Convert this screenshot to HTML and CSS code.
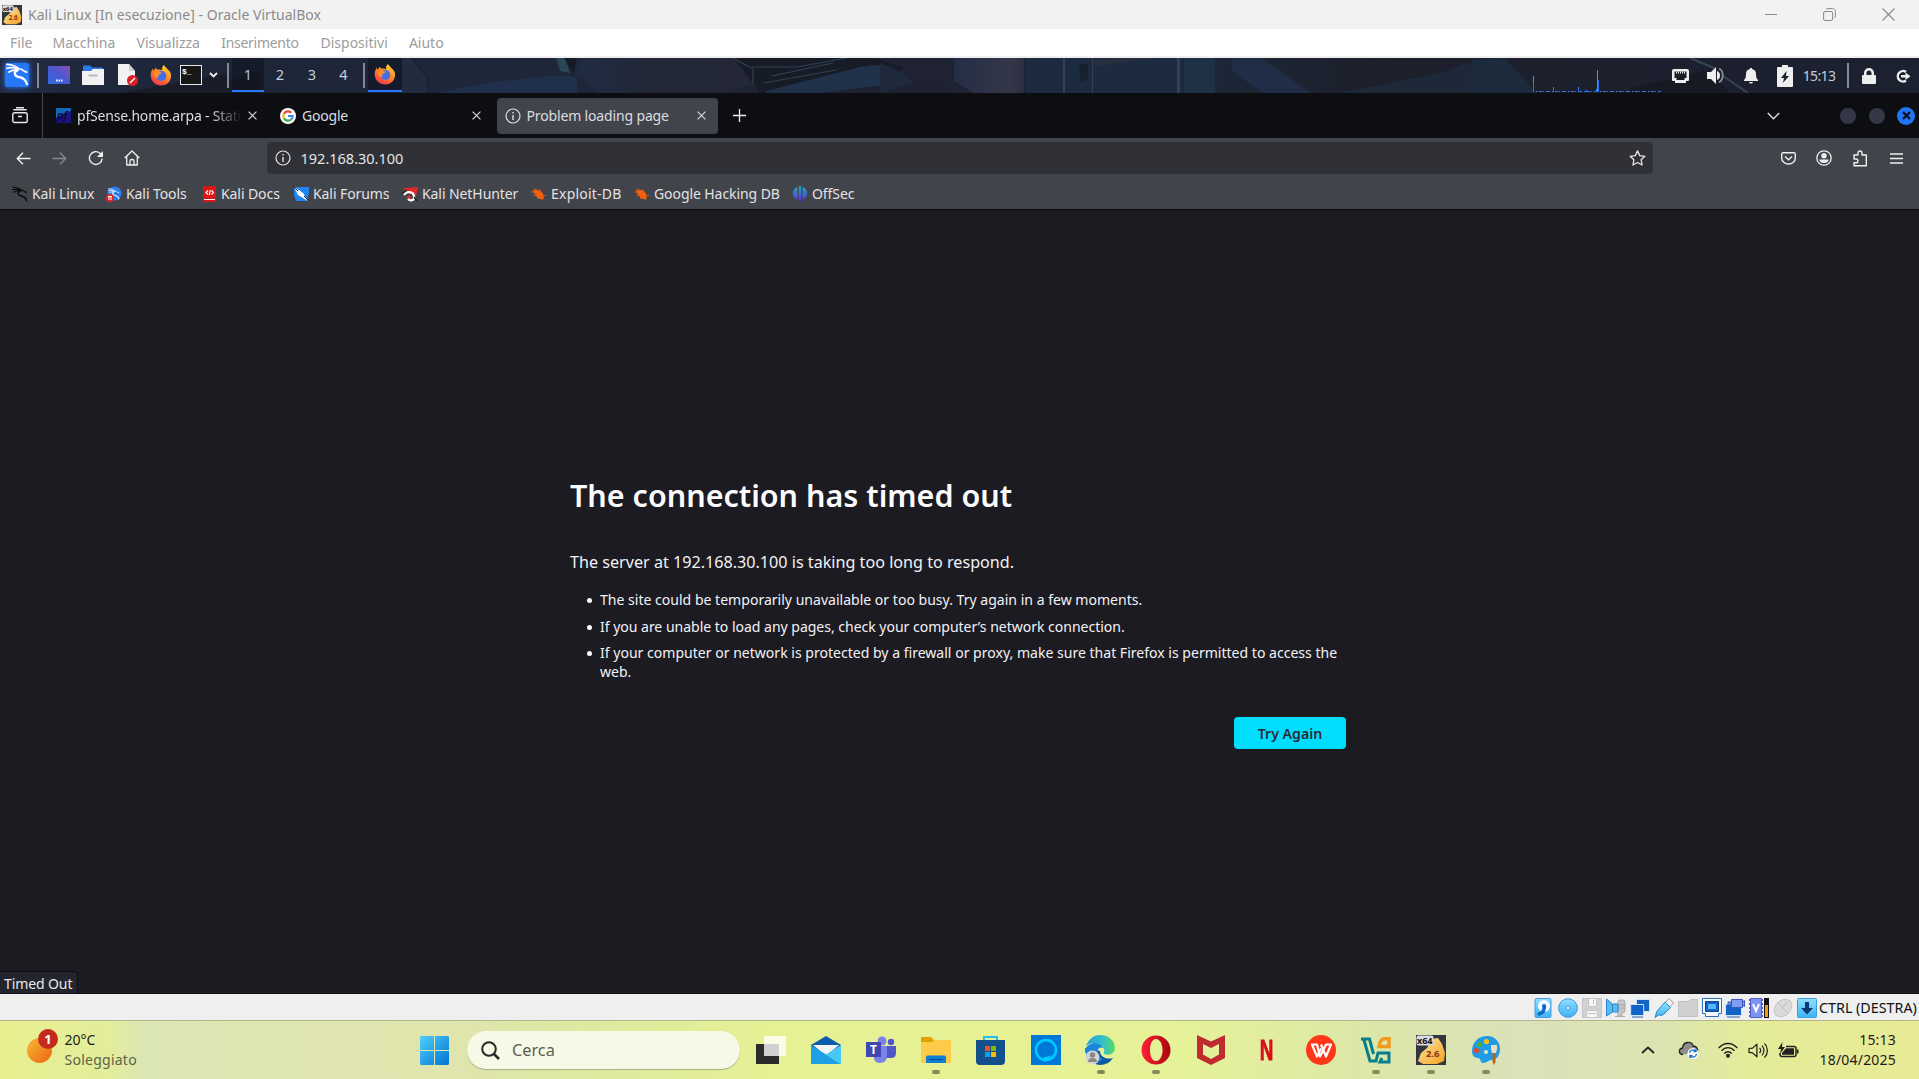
FILE: index.html
```html
<!DOCTYPE html>
<html lang="it">
<head>
<meta charset="utf-8">
<title>Kali Linux [In esecuzione] - Oracle VirtualBox</title>
<link rel="stylesheet" href="styles.css">
</head>
<body>
<svg class="defs" width="0" height="0" aria-hidden="true">
  <defs>
    <linearGradient id="fxo" x1=".8" y1="0" x2=".2" y2="1"><stop offset="0" stop-color="#ffd43a"/><stop offset=".45" stop-color="#ff8a26"/><stop offset="1" stop-color="#f0304f"/></linearGradient>
    <linearGradient id="win" x1="0" y1="0" x2="1" y2="1"><stop offset="0" stop-color="#4fd0fd"/><stop offset="1" stop-color="#0072d2"/></linearGradient>
    <linearGradient id="desk" x1="0" y1="1" x2="1" y2="0"><stop offset="0" stop-color="#2f6ae8"/><stop offset=".5" stop-color="#4b58d0"/><stop offset="1" stop-color="#8a4fb8"/></linearGradient>
    <linearGradient id="off" x1="0" y1="0" x2="0" y2="1"><stop offset="0" stop-color="#20b0c0"/><stop offset="1" stop-color="#5a28d8"/></linearGradient>
    <linearGradient id="vb" x1="0" y1="0" x2="0" y2="1"><stop offset="0" stop-color="#8fe0ff"/><stop offset="1" stop-color="#3db4f4"/></linearGradient>
    <linearGradient id="gold" x1="0" y1="0" x2="1" y2="1"><stop offset="0" stop-color="#ffe7a0"/><stop offset="1" stop-color="#f2a224"/></linearGradient>
    <symbol id="firefox" viewBox="0 0 22 22">
      <path fill="url(#fxo)" d="M14 1c1 1.700 2.500 2.600 3.500 4.200C20 7 21.500 9.500 21 13c-.7 5-4.800 8.500-10 8.500S1 17.500.7 12C.5 8.500 1.800 6 3 4.500L3.600 7 6 3.500l.8 2.300c2-.6 4 0 5.200.6C11.600 4.500 12.400 2.300 14 1z"/>
      <circle cx="11.300" cy="12" r="5" fill="#3f6fe8"/>
      <path fill="#ff8f2a" d="M4 9c2-2 4.500-1.500 6-.8l2 .6c-.8 1.500-2.700 1.400-3.600 2.400-.6.900-.4 2 .4 3C5.500 14 4 12 4 9z"/>
    </symbol>
    <symbol id="dragon" viewBox="0 0 24 24">
      <path fill="none" stroke="currentColor" stroke-width="1.800" stroke-linecap="round" d="M1 1.500c5 .5 9 1.500 12 4.200M1 5.500C5 4.500 9 5 12 6.500M3 9.500c3-2 6-2.500 9-1.500M11 6c2.500-.2 6 .5 8 2.500l2.500 1"/>
      <path fill="none" stroke="currentColor" stroke-width="2.400" stroke-linecap="round" d="M12 7.500c-4 1.500-3.500 6 .5 7 4 .8 8 1.500 9.300 7.500"/>
    </symbol>
    <symbol id="info" viewBox="0 0 16 16"><circle cx="8" cy="8" r="7" fill="none" stroke="currentColor" stroke-width="1.200"/><path fill="none" stroke="currentColor" stroke-width="1.400" d="M8 7v5M8 4v1.500"/></symbol>
    <symbol id="x" viewBox="0 0 8 8"><path fill="none" stroke="currentColor" d="M.5.5l7 7M7.500.5l-7 7"/></symbol>
    <symbol id="bug" viewBox="0 0 16 16"><path fill="#f2600f" d="M1.500 5l3-1.500L9 4.500l3 3 1 4-1.500 2-4.500-1-3-4z"/><path stroke="#d65a14" stroke-width=".8" fill="none" d="M3 2l2 3M9 3v3M0 6h4M2 10l3-1M6 13l2-2M15.500 9.500h-3M12 14l-1-3"/></symbol>
    <symbol id="vbox64" viewBox="0 0 30 30">
      <path fill="#34363f" d="M0 0h30v30H0z"/>
      <path fill="url(#gold)" d="M16 4l6-1 4 6 3 9-1 8-7 3H7l-5-3 3-8 6-5z"/>
      <rect x=".5" y=".5" width="17" height="10" rx="2" fill="#d7dade"/>
      <text x="1" y="9" class="vb-tag">x64</text><text x="10" y="22" class="vb-num">2.6</text>
    </symbol>
    <symbol id="vol" viewBox="0 0 20 16"><path d="M1 6v4h3l4.500 4V2L4 6z" fill="none" stroke="currentColor" stroke-width="1.200" stroke-linejoin="round"/><path d="M11 5.500c1.200 1.400 1.200 3.600 0 5M13.300 3.300c2.500 2.600 2.500 6.800 0 9.400M15.700 1.200c3.700 3.800 3.700 9.800 0 13.600" fill="none" stroke="currentColor" stroke-width="1.200"/></symbol>
  </defs>
</svg>

<header class="titlebar">
  <svg class="app-icon" width="20" height="20"><use href="#vbox64"/></svg>
  <span class="app-title">Kali Linux [In esecuzione] - Oracle VirtualBox</span>
  <div class="window-buttons">
    <svg width="12" height="12"><path d="M0 5.500h12" stroke="#8a8a8a"/></svg>
    <svg width="13" height="13" fill="none" stroke="#8a8a8a"><rect x=".6" y="3.500" width="9" height="9" rx="1.500"/><path d="M3 1.500c.4-.6 1-.9 1.800-.9h4.700c1.700 0 2.900 1.200 2.900 2.900V8c0 .8-.3 1.400-.9 1.800"/></svg>
    <svg width="13" height="13"><path d="M.5.5l12 12M12.500.5l-12 12" stroke="#8a8a8a" stroke-width="1.100"/></svg>
  </div>
</header>
<nav class="menubar"><span>File</span><span>Macchina</span><span>Visualizza</span><span class="tight">Inserimento</span><span>Dispositivi</span><span>Aiuto</span></nav>

<section class="panel">
  <svg class="wallpaper" width="1919" height="35" viewBox="0 0 1919 35" preserveAspectRatio="none">
    <defs><linearGradient id="wp"><stop offset="0" stop-color="#212a3f"/><stop offset=".12" stop-color="#1d2537"/><stop offset=".25" stop-color="#1e2739"/><stop offset=".5" stop-color="#1f2231"/><stop offset=".6" stop-color="#1c293c"/><stop offset=".72" stop-color="#1d1f2b"/><stop offset="1" stop-color="#1c2130"/></linearGradient>
    <linearGradient id="fade"><stop offset="0" stop-color="#1e2b43"/><stop offset=".4" stop-color="#232838"/><stop offset="1" stop-color="#232737"/></linearGradient>
    <linearGradient id="blk"><stop offset="0" stop-color="#242d46"/><stop offset=".8" stop-color="#353748"/><stop offset="1" stop-color="#2a3044"/></linearGradient></defs>
    <path fill="url(#wp)" d="M0 0h1919v35H0z"/>
    <path fill="#1a1d28" d="M215 28l45-16v23h-45zM120 35l110-20v20z"/>
    <path fill="#232c3f" d="M402 0h10l16 20 2 15h-28z"/>
    <path fill="none" stroke="#182234" stroke-width="2" d="M412 0l15 19 2 16"/>
    <path fill="#20304c" d="M440 35c30-8 70-14 125-18l12 3v15z"/>
    <path fill="#2b4558" d="M556 0h9l5 15-10-2z"/><path fill="#141a25" d="M564 0h12l-2 16z"/>
    <path fill="url(#fade)" d="M582 0h150l20 26-35 9H600L575 15z"/>
    <path fill="#171b26" d="M735 0h140l30 10-25 12-70 13h-50z"/>
    <path fill="none" stroke="#2f4154" stroke-width="1.200" d="M733 0l20 11v15M772 18l61-13M764 25l72-13M752 9h45l50-9"/>
    <path fill="#1f3249" d="M766 33L860 9c15-4 35-2 48 12l-28 14H766z"/>
    <path fill="#1d2130" d="M820 35l105-13 30 13z"/>
    <path fill="#1f293c" d="M880 5l14 5 20 15-34 10z"/>
    <path fill="url(#blk)" d="M954 0h70v35h-50l-20-12z"/>
    <path fill="#1c2b40" d="M1026 0h156v35h-156z"/><path fill="#343f55" d="M1063 0h2v35h-2zM1092 0h1v35h-1zM1177 0h3v35h-3z"/>
    <path fill="#292e3f" d="M1094 2l20-2h40l-35 5-25 4z"/><path fill="#162030" d="M1079 6h9v15l-7 3z"/>
    <path fill="#1f3145" d="M1184 0h31v35h-31z"/>
    <path fill="#1f2d47" d="M1231 0h30l50 35h-48l-30-21z"/>
    <path fill="#1d2939" d="M1340 35l100-20 30-11 8 31z"/>
    <path fill="#1c2b3c" d="M1472 2l33-2 32 35h-70z"/>
    <path fill="none" stroke="#34455a" stroke-width="2" d="M1723 18l25 17M1690 0l24 10"/><path fill="#181a23" d="M1630 30l80-18 20 23h-100z"/>
  </svg>
  <div class="launchers">
    <span class="cell"><svg class="kali" width="26" height="26" viewBox="0 0 26 26"><rect x="1" y="1" width="24" height="24" rx="2" fill="#2678f8"/><svg x="2" y="1" width="23" height="23"><use href="#dragon"/></svg></svg></span>
    <i class="sep"></i>
    <span class="cell"><svg width="22" height="18"><path fill="url(#desk)" d="M0 0h22v18H0z"/><path stroke="#fff" stroke-width="2" stroke-dasharray="1.500 1" d="M8 14.500h7"/></svg></span>
    <span class="cell"><svg width="22" height="20"><path fill="#2f78e8" d="M1 9V1.500Q1 .5 2 .5h6l2 2h10q1 0 1 1V9z"/><path fill="#f2f2f2" d="M0 6h9l2-2h11v16H0z"/><path stroke="#bbb" stroke-width="2" d="M6.500 10.500h9"/></svg></span>
    <span class="cell page-icon"><svg width="22" height="24"><path fill="#f1f1f1" d="M1 1h11l6 7v14H1z"/><path fill="#cfcfcf" d="M12 1l6 7h-6z"/><circle cx="15.500" cy="17.500" r="5.500" fill="#d81f26"/><path stroke="#fff" stroke-width="1.500" d="M13 20l5-5"/></svg></span>
    <span class="cell"><svg width="22" height="22"><use href="#firefox"/></svg></span>
    <span class="cell terminal">$_</span>
    <span class="cell"><svg width="9" height="6"><path fill="none" stroke="#eee" stroke-width="1.800" d="M1 1l3.500 3.500L8 1"/></svg></span>
    <i class="sep"></i>
    <span class="cell ws active">1</span><span class="cell ws">2</span><span class="cell ws">3</span><span class="cell ws">4</span>
    <i class="sep"></i>
    <span class="cell active"><svg width="22" height="22"><use href="#firefox"/></svg></span>
  </div>
  <div class="indicators">
    <svg width="129" height="35"><path stroke="#2a74f0" d="M.5 19v15M20.500 29v5M45.500 29v5M53.500 32v2M63.500 31v3"/><path stroke="#25a7e0" d="M.5 18v6M64.500 12v22"/><path stroke="#2a74f0" d="M65.500 22v12"/><path stroke="#2a74f0" stroke-dasharray="2 1 3 1 1 2 4 2" d="M3 33.500h125"/></svg>
    <span class="cell"><svg width="17" height="14"><path fill="#eee" fill-rule="evenodd" d="M2 0h13q2 0 2 2v9q0 1-1 1h-2v2H3v-2H1q-1 0-1-1V2q0-2 2-2zM2.500 2.500V9h2v2h8V9h2V2.500z"/><path stroke="#eee" stroke-dasharray="1 1" stroke-width="2" d="M4 3.500h9"/></svg></span>
    <span class="cell"><svg width="18" height="17"><path fill="#eee" d="M0 5h4l5-5v17l-5-5H0z"/><path fill="#eee" d="M10 4q3 1 3 4.500T10 13z"/><path fill="none" stroke="#888e98" stroke-width="1.800" d="M12 1.500c5 2.500 5 11 0 14"/></svg></span>
    <span class="cell"><svg width="14" height="16"><path fill="#eee" d="M6 0h2v1c3 .6 4 2.500 4 5 0 3 .5 5 2 6v1H0v-1c1.500-1 2-3 2-6 0-2.500 1-4.400 4-5zM5 14h4q-.5 1.500-2 1.500T5 14z"/></svg></span>
    <span class="cell"><svg width="16" height="22"><path fill="#eee" d="M1 2h4V0h6v2h4q1 0 1 1v18q0 1-1 1H1q-1 0-1-1V3q0-1 1-1z"/><path fill="#1c2233" d="M9.500 6L4 13h3l-1 5 6-7H9z"/></svg></span>
    <span class="cell clock">15:13</span>
    <i class="sep"></i>
    <span class="cell"><svg width="14" height="16"><path fill="#eee" d="M1 7h1V5a5 5 0 0 1 10 0v2h1q1 0 1 1v7q0 1-1 1H1q-1 0-1-1V8q0-1 1-1zm3.500 0h5V5a2.500 2.500 0 0 0-5 0z"/></svg></span>
    <span class="cell logout"><svg width="16" height="14"><path fill="none" stroke="#eee" stroke-width="2.400" d="M11 3a5.200 5.200 0 1 0 0 8.500M6 7.200h6"/><path fill="#eee" d="M10.500 3.500l5 3.700-5 3.700z"/></svg></span>
  </div>
</section>

<section class="tabs">
  <div class="view-button"><svg width="16" height="17" fill="none" stroke="#e8e8e8" stroke-width="1.400"><rect x=".8" y="5.700" width="14.400" height="9.800" rx="1.800"/><path d="M1.500 3.200Q1.500 2.800 2.500 2.800h11q1 0 1 .4M4 .7h8M6 9.500h4"/></svg></div>
  <div class="tab first"><svg width="15" height="15"><path fill="#1468b8" d="M0 0h15v15H0z"/><path fill="#191583" d="M0 10l8-4 7-3v12H0z"/><text x="1" y="11" class="pf">pf</text></svg><span class="label">pfSense.home.arpa - Status</span><svg class="close" width="9" height="9"><use href="#x"/></svg></div>
  <div class="tab second"><svg width="16" height="16" viewBox="0 0 16 16"><circle cx="8" cy="8" r="8" fill="#fff"/><g fill="none" stroke-width="2.200"><path stroke="#ea4335" d="M3.900 5.800A4.700 4.700 0 0 1 11.300 4.700"/><path stroke="#fbbc05" d="M3.900 5.800a4.700 4.700 0 0 0 0 4.400"/><path stroke="#34a853" d="M3.900 10.200a4.700 4.700 0 0 0 7.200 1.300"/><path stroke="#4285f4" d="M11.100 11.500A4.700 4.700 0 0 0 12.700 8H8"/></g></svg><span class="label">Google</span><svg class="close" width="9" height="9"><use href="#x"/></svg></div>
  <div class="tab third"><svg width="16" height="16"><use href="#info"/></svg><span class="label">Problem loading page</span><svg class="close" width="9" height="9"><use href="#x"/></svg></div>
  <svg class="new-tab" width="13" height="13"><path stroke="#eee" stroke-width="1.300" d="M6.500 0v13M0 6.500h13"/></svg>
  <svg class="tab-list" width="13" height="8"><path fill="none" stroke="#ddd" stroke-width="1.400" d="M.8 1l5.700 5.700L12.200 1"/></svg>
  <div class="controls"><i></i><i></i><b><svg width="9" height="9"><path stroke="#0b1220" stroke-width="2.300" d="M1 1l7 7M8 1L1 8"/></svg></b></div>
</section>

<section class="toolbar">
  <div class="nav-buttons">
    <svg width="15" height="13"><path fill="none" stroke="#f0f0f0" stroke-width="1.400" d="M14.500 6.500H1.500M7 .8L1.300 6.500 7 12.200"/></svg>
    <svg width="15" height="13"><path fill="none" stroke="#85878c" stroke-width="1.400" d="M.5 6.500h13M8 .8l5.700 5.700L8 12.200"/></svg>
    <svg width="16" height="16"><path fill="none" stroke="#f0f0f0" stroke-width="1.400" d="M14.200 8.500A6.400 6.400 0 1 1 12 3.200L14 5.500"/><path fill="#f0f0f0" d="M15 1v6H9z"/></svg>
    <svg width="16" height="16"><path fill="none" stroke="#f0f0f0" stroke-width="1.300" stroke-linejoin="round" d="M.7 8L8 1l7.300 7M2.700 6.500V15h10.600V6.500M6 15v-4q0-1.500 2-1.500t2 1.500v4"/></svg>
  </div>
  <div class="url"><svg width="16" height="16"><use href="#info"/></svg><span>192.168.30.100</span><svg class="star" width="17" height="16"><path fill="none" stroke="#e8e8e8" stroke-width="1.300" stroke-linejoin="round" d="M8.500.9l2.200 4.700 5.200.7-3.800 3.500 1 5.200-4.600-2.500L3.900 15l1-5.200L1.100 6.300l5.200-.7z"/></svg></div>
  <div class="tool-buttons">
    <svg width="15" height="13" fill="none" stroke="#eee" stroke-width="1.400"><path d="M2.200.7h10.600q1.500 0 1.500 1.500V6a6.800 6 0 0 1-13.600 0V2.200Q.7.700 2.200.7z"/><path d="M4 4.500l3.500 3.200L11 4.500"/></svg>
    <svg width="16" height="16"><circle cx="8" cy="8" r="7.200" fill="none" stroke="#eee" stroke-width="1.300"/><circle cx="8" cy="5.800" r="2.700" fill="#eee"/><path fill="#eee" d="M3.200 9.500h9.600q-.6 3.500-4.800 3.500T3.200 9.500z"/></svg>
    <svg width="15" height="17"><path fill="none" stroke="#eee" stroke-width="1.400" stroke-linejoin="round" d="M1 5h4V3a2 2 0 0 1 4 0v2h4.300v10.800H1v-3h2a1.800 1.800 0 0 0 0-3.800H1z"/></svg>
    <svg width="13" height="11"><path stroke="#eee" stroke-width="1.300" d="M0 1h13M0 5.500h13M0 10h13"/></svg>
  </div>
</section>

<section class="bookmarks">
  <span><svg class="black" width="16" height="16"><use href="#dragon"/></svg>Kali Linux</span>
  <span><svg width="16" height="16"><circle cx="8.500" cy="7.500" r="7" fill="#2b7cf0"/><g color="#dff0ff"><svg x="2" y="2" width="12" height="12"><use href="#dragon"/></svg></g><circle cx="4" cy="12" r="4" fill="#e02222"/><path stroke="#fff" d="M2 10.500h4M3 10v4M5 10v4"/></svg>Kali Tools</span>
  <span><svg width="16" height="16"><path fill="#dc1414" d="M2 0h13v16H2z"/><path fill="#fff" d="M3 13h11v1H3z"/><path fill="none" stroke="#fff" stroke-width="1.200" d="M7 4.500L5 6.500l2 2M10.500 4.500l2 2-2 2M9.300 4l-1 5"/></svg>Kali Docs</span>
  <span><svg width="16" height="16"><path fill="#1e86f4" d="M1 1h15v5l-2 9H3L1 9z"/><path fill="#fff" d="M1 1l5 3 5 4 1 3 3 4-5-3-5-3z"/><path stroke="#222" d="M0 0l5 5M11 10l5 5"/></svg>Kali Forums</span>
  <span><svg width="16" height="16"><path fill="#e02828" d="M2 2l14-1-2 9-3-3-4 1-4-2z"/><path fill="#e02828" d="M4 12l4-3 2 5z"/><path fill="none" stroke="#fff" stroke-width="2.300" d="M2 9c2-4 9-4 10 1s-4 5-6 3"/><path fill="none" stroke="#222" stroke-width="1.400" d="M0 8l5-4M12 11l3 4"/></svg>Kali NetHunter</span>
  <span class="wide"><svg width="16" height="16"><use href="#bug"/></svg>Exploit-DB</span>
  <span><svg width="16" height="16"><use href="#bug"/></svg>Google Hacking DB</span>
  <span><svg width="16" height="16"><path fill="url(#off)" d="M5.500.8v13C2 12.500.8 10 .8 7.500S2.500 2 5.500.8zM10.500.8v13c3.500-1.300 4.700-3.800 4.700-6.300S13.500 2 10.500.8zM7 0h2l.5 14L8 16l-1.500-2z"/></svg>OffSec</span>
</section>

<main class="page">
  <article class="error">
    <h1>The connection has timed out</h1>
    <p>The server at 192.168.30.100 is taking too long to respond.</p>
    <ul>
      <li><span>The site could be temporarily unavailable or too busy. Try again in a few moments.</span></li>
      <li class="narrow"><span>If you are unable to load any pages, check your computer’s network connection.</span></li>
      <li><span>If your computer or network is protected by a firewall or proxy, make sure that Firefox is permitted to access the web.</span></li>
    </ul>
    <button type="button">Try Again</button>
  </article>
  <div class="status-label">Timed Out</div>
</main>

<footer class="vm-status">
  <svg width="20" height="20"><rect x="1" y=".5" width="16" height="19" rx="1.500" fill="url(#vb)" stroke="#4a9be0"/><circle cx="10" cy="8" r="6" fill="#f4faff"/><circle cx="10" cy="8" r="2" fill="#1268c8"/><path stroke="#1268c8" stroke-width="3.500" stroke-linecap="round" d="M10.500 9L9 14l-4 2"/></svg>
  <svg width="20" height="20"><circle cx="10" cy="10" r="9.300" fill="url(#vb)" stroke="#3b93d8"/><circle cx="10" cy="10" r="2" fill="#eaf7ff" stroke="#3b93d8"/></svg>
  <svg width="20" height="20" fill="#d2d2d2" stroke="#c4c4c4"><path d="M.5.5h19v19H.5z"/><path fill="#f4f4f4" d="M6.500.5h8v8h-8zM4.500 12.500h11v7h-11z"/><path d="M11.500 2v4M6 15.500h8"/></svg>
  <svg width="20" height="20"><path fill="#c6c6c6" stroke="#aaa" d="M12 4q0-2 2-2h3q2 0 2 2v9q0 2-3 2v3h-4z"/><path stroke="#aaa" d="M12 7h7M12 10h7M9 18.500h10"/><path fill="#59bdf5" stroke="#2c86cc" d="M.5 1l6 5H12v8H6.500l-6 4z"/><path stroke="#2c86cc" d="M6.500 6v8"/></svg>
  <svg width="20" height="20" stroke="#cfe4f8"><path fill="#1264c8" d="M6.500 1.500h13v12h-13z"/><path fill="#1264c8" d="M.7 6.500h13v11h-13z"/><path stroke="#2e66a8" d="M2 19h11"/></svg>
  <svg width="20" height="20"><path fill="#f2f2f2" stroke="#999" d="M11 5l4-4.500L19.500 5l-4 4z"/><path fill="url(#vb)" stroke="#2d83c8" d="M4 12l7-8 5.500 5.500-7 7q-2 1.500-5 .5L1 19.500l1-3q0-2.500 2-4.500z"/></svg>
  <svg width="20" height="20"><path fill="#d0d0d0" stroke="#c2c2c2" d="M.5 3.500h10l2-2h7v17H.5z"/></svg>
  <svg width="20" height="20"><path fill="#f4f9ff" stroke="#2b6fc0" d="M.5.5h19v15h-3v3h-13v-3h-3z"/><path fill="#1264c8" stroke="#0d478f" d="M3.500 3.500h13v10h-13z"/><path fill="#58b6ff" d="M6 6h8v5H6z"/></svg>
  <svg width="20" height="20"><path fill="#1264c8" stroke="#cfe4f8" d="M.5 6.500h16v11H.5z"/><path stroke="#2e66a8" d="M2 19h13"/><path fill="#7d9cf2" stroke="#3d55c0" d="M6.500 1.500h11v8h-11zM3 4h3v3H3zM17.500 4l2-1.500v6l-2-1.500"/></svg>
  <svg width="20" height="20"><path fill="#7e93f4" stroke="#5260c4" d="M1.500.5h11v19h-11z"/><path stroke="#5260c4" stroke-dasharray="2 2" stroke-width="2" d="M1 1v18M13 1v18"/><path fill="none" stroke="#fff" stroke-width="2" d="M4 6l3 7 3-7"/><path fill="#111" d="M15 0h5v20h-5z"/><path fill="#f29a12" d="M16 7h3v12h-3z"/></svg>
  <svg width="20" height="20"><ellipse cx="10" cy="10" rx="10" ry="7.500" transform="rotate(-45 10 10)" fill="#dadada" stroke="#c6c6c6"/><path fill="none" stroke="#bbb" d="M5 5l9 9M10 9l4-5"/></svg>
  <svg width="20" height="20"><rect x=".5" y=".5" width="19" height="19" rx="1" fill="url(#vb)" stroke="#3a9de0"/><path fill="#0c3a72" d="M8 4h4v6h4l-6 6.500L4 10h4z"/></svg>
  <span>CTRL (DESTRA)</span>
</footer>

<footer class="taskbar">
  <div class="weather">
    <div class="sun"><b>1</b></div>
    <div><div>20°C</div><div class="muted">Soleggiato</div></div>
  </div>
  <div class="apps">
    <span class="app start"><svg width="29" height="29"><path fill="url(#win)" d="M1 0h13v14H0V1zM15 0h13l1 1v13H15zM0 15h14v14H1l-1-1zM15 15h14v13l-1 1H15z"/></svg></span>
    <div class="search"><svg width="19" height="19"><circle cx="8" cy="8" r="6.800" fill="none" stroke="#26282a" stroke-width="2"/><path stroke="#26282a" stroke-width="2.500" d="M13 13l5 5"/></svg>Cerca</div>
    <span class="app"><svg width="30" height="28"><path fill="#2b2b2b" d="M0 8h23v20H0z"/><path fill="#fff" fill-opacity=".78" d="M8 0h22v20H8z"/></svg></span>
    <span class="app"><svg width="30" height="28"><path fill="#0d5cab" d="M0 9L15 0l15 9v10H0z"/><path fill="#f4f4f4" d="M2 9h26L15 20z"/><path fill="#1f9fe6" d="M0 9l15 9.500L30 28H0z"/><path fill="#46c8f7" d="M30 9L15 18.500 30 28z"/></svg></span>
    <span class="app"><svg width="30" height="28"><circle cx="16" cy="5" r="4.500" fill="#7b83eb"/><circle cx="25" cy="6" r="3.200" fill="#5059c9"/><path fill="#5059c9" d="M20 10h10v7q0 5-5 5h-5z"/><path fill="#7b83eb" d="M8 10h13v9q0 8-7 8t-6-8z"/><path fill="#4247b0" d="M0 6h15v15H0z"/><text x="4" y="18" class="teams">T</text></svg></span>
    <span class="app run"><svg width="30" height="28"><path fill="#e0a006" d="M0 2q0-1 1-1h9l3 3h17v8H0z"/><path fill="#fdcb47" d="M0 6h11l2-2h17v22q0 1-1 1H1q-1 0-1-1z"/><path fill="#0f7fd6" d="M5 27v-6q0-1.500 1.500-1.500h17q1.500 0 1.500 1.500v6z"/><path stroke="#0a4c94" d="M8 23.500h14"/></svg></span>
    <span class="app"><svg width="29" height="30"><path fill="none" stroke="#25bff5" stroke-width="2" d="M8 6V2h13v4"/><path fill="#12508c" d="M0 5h29v21q0 4-4 4H4q-4 0-4-4z"/><path fill="#f25022" d="M9 11h5v5H9z"/><path fill="#7fba00" d="M15 11h5v5h-5z"/><path fill="#00a4ef" d="M9 17h5v5H9z"/><path fill="#ffb900" d="M15 17h5v5h-5z"/></svg></span>
    <span class="app"><svg width="30" height="30"><path fill="#0078d7" d="M0 0h30v30H0z"/><circle cx="15" cy="15" r="10" fill="none" stroke="#00caff" stroke-width="2.500"/><path fill="#00caff" d="M13 22q4 0 8-2-3 5-8 7z"/></svg></span>
    <span class="app run"><svg width="31" height="30"><defs><linearGradient id="eg"><stop offset="0" stop-color="#219fd8"/><stop offset=".6" stop-color="#35c1c8"/><stop offset="1" stop-color="#5bdc5c"/></linearGradient></defs><path fill="#0c59a4" d="M0 13C1 25 10 34 23 28q3-2 5-5c-6 2-13-1-13-7z"/><path fill="#1b86dc" d="M0 15C3 6 16 6 18 13c-6-3-8 7 0 12-9 3-17-1-18-10z"/><path fill="url(#eg)" d="M1 11C4 3 10 0 15 0c9 0 15 6 15 13 0 6-6 8-11 6-1-1 1-2 0-5C16 7 6 6 1 11z"/><circle cx="7.500" cy="22.500" r="7" fill="#d4d4d4"/><circle cx="7.500" cy="20" r="2.700" fill="#888"/><path fill="#888" d="M3 27q0-4 4.500-4t4.500 4z"/></svg></span>
    <span class="app run"><svg width="30" height="30"><defs><linearGradient id="og"><stop offset="0" stop-color="#ff2037"/><stop offset="1" stop-color="#a8060f"/></linearGradient></defs><path fill="url(#og)" fill-rule="evenodd" d="M15 .5a14.500 14.500 0 1 1 0 29 14.500 14.500 0 0 1 0-29zm0 3.500c-4 0-6 5-6 11s2 11 6 11 6.500-5 6.500-11S19 4 15 4z"/></svg></span>
    <span class="app"><svg width="28" height="30"><path fill="#c02b2f" fill-rule="evenodd" d="M0 0l14 6.500L28 0v23l-14 7-14-7zM6 9v10.500l8 4.500 8-4.500V9l-8 4z"/></svg></span>
    <span class="app netflix">N</span>
    <span class="app"><svg width="30" height="30"><circle cx="15" cy="15" r="15" fill="#ff3617"/><path fill="none" stroke="#fff" stroke-width="2.200" stroke-linejoin="round" d="M5 9.500h6l3 12 6-12h5l-5 12-5-12M6 9.500l5 12 4-8"/></svg></span>
    <span class="app run"><svg width="30" height="27"><path fill="none" stroke="#067e8d" stroke-width="3" d="M0 2h8.500l4 15M3 3l6 21h6l2-8h11v9h-9l2-4"/><path fill="none" stroke="#f39a1d" stroke-width="3.500" d="M18 9.500q1-7.700 6-7.700h4v7.700z"/></svg></span>
    <span class="app run"><svg width="30" height="30"><use href="#vbox64"/></svg></span>
    <span class="app run"><svg width="30" height="30"><path fill="#1f9be8" d="M1 16C1 7 8 1 16 1s13 6 13 13-4 11-8 11-5 3-9 3c-3 0-2-5-5-5s-6-2-6-7z"/><circle cx="8.500" cy="9.500" r="2.600" fill="#4caf2e"/><circle cx="15.500" cy="6.500" r="2.600" fill="#ffc20e"/><circle cx="5.500" cy="15.500" r="2.600" fill="#e8452c"/><circle cx="15" cy="17" r="2" fill="#d9efb0"/><path fill="#b5651d" d="M21.500 16h3v11l-1.500 3-1.500-3z"/><path fill="#eadfcb" d="M20 10h6v4l-1 4h-4l-1-4z"/></svg></span>
  </div>
  <div class="tray">
    <svg width="14" height="8"><path fill="none" stroke="#222" stroke-width="1.700" d="M1 7l6-5.500L13 7"/></svg>
    <svg width="21" height="18"><path fill="#8d8d8d" stroke="#262626" stroke-width="1.300" d="M5 13.500C.5 13.500 0 8 4.500 7 5 0 14 0 15 5c4 0 5 3 4.500 6"/><circle cx="15" cy="12.500" r="5.500" fill="#fff"/><path fill="none" stroke="#1474d0" stroke-width="1.400" d="M11.500 12a3.500 3.500 0 0 1 6-2M18.500 13a3.500 3.500 0 0 1-6 2M18 8v2.500h-2.500M12 17v-2.500h2.500"/></svg>
    <svg width="20" height="16" fill="none" stroke="#222" stroke-width="1.400"><path d="M.7 6c5.500-6 13.100-6 18.600 0M3.500 8.800c4-4.300 9-4.300 13 0M6.300 11.500c2.300-2.400 5.100-2.400 7.400 0"/><circle cx="10" cy="13.800" r="1.300" fill="#222"/></svg>
    <svg class="ink volume" width="21" height="17"><use href="#vol"/></svg>
    <svg class="battery" width="21" height="17"><path fill="none" stroke="#222" stroke-width="1.500" d="M8 4.500h8q2 0 2 2v6q0 2-2 2H4q-2 0-2-2V11"/><path fill="#222" d="M8 6.300h8v6.500H4V11zM19 7.500h1.500v4H19zM4.500 0L0 7h3L2 12l5-7H4z"/></svg>
    <div class="datetime"><div>15:13</div><div>18/04/2025</div></div>
  </div>
</footer>
</body>
</html>
```

FILE: styles.css
```css
* { box-sizing: border-box; }
body {
  margin: 0;
  width: 100vw;
  height: 100vh;
  overflow: hidden;
  display: flex;
  flex-direction: column;
  background: #1c1b22;
  font: 14px/20px "Noto Sans", "Open Sans", sans-serif;
}
svg { display: block; flex: none; }
.defs { position: absolute; }
i, b { font-style: normal; }
.vb-tag { font: 700 9px "Noto Sans", sans-serif; fill: #111; }
.vb-num { font: 700 9.5px "Noto Sans", sans-serif; fill: #8c3417; }

/* VirtualBox window */
.titlebar { height: 29px; flex: none; display: flex; align-items: center; background: #f2f2f2; color: #8b8b8b; padding-left: 2px; }
.app-title { margin-left: 6px; letter-spacing: .03px; }
.window-buttons { margin-left: auto; display: grid; grid-template-columns: 58px 58px 60px; justify-items: center; align-items: center; padding-right: 1px; }
.menubar { height: 29px; flex: none; display: grid; grid-template-columns: 42.500px 84px 84.700px 99.300px 88.400px 60px; align-items: center; padding-left: 10px; background: #fff; border-bottom: 2px solid #f0f0f0; color: #9c9c9c; }
.tight { letter-spacing: -.28px; }

/* Kali panel */
.panel { height: 35px; flex: none; display: flex; justify-content: space-between; position: relative; background: #1c2333; border-bottom: 1px solid #15181f; }
.wallpaper { position: absolute; left: 0; top: 0; }
.launchers, .indicators { display: grid; position: relative; height: 34px; align-items: center; }
.launchers { grid-template-columns: 34px 8px 34px 34px 34px 33px 27px 19px 9px 32px 32px 32px 31px 9px 34px; }
.indicators { grid-template-columns: 129px 36px 36px 34px 34px 34px 24px 18px 41px; padding-bottom: 1px; }
.cell { height: 34px; display: flex; align-items: center; justify-content: center; color: #c6cedb; }
.kali { color: #fff; filter: drop-shadow(0 0 3px #2678f8); }
.page-icon { padding-left: 2px; }
.sep { width: 2px; height: 25px; background: #858a96; justify-self: center; }
.active { background: rgba(10, 13, 24, .42); border-bottom: 2px solid #2777ff; }
.ws.active { color: #a5c3e4; }
.ws { font-size: 14.500px; padding-bottom: 2px; }
.ws.active { padding-bottom: 0; }
.terminal { width: 22px; height: 20px; margin-left: 3px; border: 1px solid #e8e8e8; background: #171717; color: #fff; font: 700 8px/8px "Liberation Mono", monospace; align-items: flex-start; justify-content: flex-start; padding: 2px 0 0 1px; }
.clock { letter-spacing: -.65px; }
.logout { padding-left: 9px; }

/* Tab strip */
.tabs { height: 45px; flex: none; display: flex; align-items: center; background: #0c0e12; color: #dcdde0; letter-spacing: -.2px; }
.view-button { width: 43px; height: 45px; border-right: 1px solid #45474d; display: flex; align-items: center; padding-left: 12px; }
.tab { height: 36px; display: flex; align-items: center; }
.tab .label { margin-left: 6px; flex: 1; white-space: nowrap; overflow: hidden; }
.first { width: 213px; margin-left: 13px; }
.tab.first .label { flex: none; width: 167px; margin-left: 6px; -webkit-mask-image: linear-gradient(90deg, #000 80%, transparent 99%); mask-image: linear-gradient(90deg, #000 80%, transparent 99%); }
.first .close { margin-left: 4px; }
.second { width: 217px; margin-left: 11px; padding-right: 16px; }
.third { width: 221px; padding: 0 12px 0 8px; background: #42444b; border-radius: 4px; }
.tab.third .label { margin-left: 5.500px; letter-spacing: -.15px; }
.pf { font: italic 700 11px "Noto Sans", sans-serif; fill: #0a0a3c; }
.new-tab { margin-left: 15px; }
.tab-list { margin-left: auto; }
.controls { width: 79px; margin-left: 60px; display: flex; align-items: center; gap: 13px; }
.controls i { width: 16px; height: 16px; border-radius: 50%; background: #343847; }
.controls b { width: 18px; height: 18px; margin-left: -1px; border-radius: 50%; background: #2374f5; display: grid; place-items: center; }

/* Address row */
.toolbar { height: 40px; flex: none; display: flex; align-items: center; background: #42444b; color: #f0f0f0; }
.nav-buttons { width: 267px; display: grid; grid-template-columns: 36px 36px 36px 36px; justify-items: center; padding-left: 5.500px; align-items: center; }
.url { width: 1386px; height: 32px; display: flex; align-items: center; background: #303136; border-radius: 4px; padding: 0 7px 0 7.500px; color: #e4e4e6; font-size: 14.500px; }
.url span { margin-left: 10px; }
.star { margin-left: auto; }
.tool-buttons { margin-left: auto; display: grid; grid-template-columns: 36px 36px 36px 36px; justify-items: center; align-items: center; padding-right: 5px; }

.bookmarks { height: 32px; flex: none; display: grid; grid-template-columns: 94px 95px 92px 109px 129px 103px 158px 90px; align-items: center; padding-left: 12px; background: #42444b; border-bottom: 1px solid #0c0c0d; color: #e2e2e4; letter-spacing: -.08px; white-space: nowrap; }
.bookmarks span { display: flex; align-items: center; gap: 4px; }
.bookmarks .wide { letter-spacing: .22px; }
.black { color: #0a0a0a; }

/* Network error page */
.page { flex: 1; display: flex; flex-direction: column; justify-content: space-between; background: #1c1b22; color: #f2f2f6; border-bottom: 1px solid #121216; }
.error { width: 776px; margin: 265px 0 0 570px; display: flex; flex-direction: column; }
h1 { margin: 0; font-size: 30.500px; line-height: 40px; font-weight: 600; color: #fbfbfe; }
p { margin: 36px 0 0; font-size: 16.150px; line-height: 22px; }
ul { margin: 17px 0 0; padding-left: 17px; line-height: 19px; font-size: 14.060px; list-style: none; }
li { display: flex; gap: 8px; margin-bottom: 7.500px; }
li::before { content: ""; flex: none; width: 5px; height: 5px; margin-top: 8px; border-radius: 50%; background: #fbfbfe; }
.narrow { letter-spacing: -.03px; }
button { align-self: flex-end; width: 112px; height: 32px; margin-top: 28.500px; border: 0; border-radius: 4px; background: #00ddff; color: #2b2a33; font: 600 14.130px "Noto Sans", sans-serif; padding: 0; }
.status-label { align-self: flex-start; width: 78px; height: 22px; padding-left: 4px; background: #23252e; border: solid #0e0e12; border-width: 1px 1px 0 0; border-radius: 0 4px 0 0; line-height: 23px; letter-spacing: -.1px; color: #e8e8ea; }

/* Virtual machine indicators */
.vm-status { height: 26px; flex: none; display: grid; grid-template-columns: repeat(12, 23.900px) 100px; justify-content: end; align-items: center; background: #efefef; color: #111; padding-top: 2px; }
.vm-status svg { margin-left: 2px; }
.vm-status span { font-size: 14.300px; white-space: nowrap; line-height: 20px; }

/* Host taskbar */
.taskbar { height: 59px; flex: none; display: flex; align-items: center; border-top: 1px solid #b2b68a; background: linear-gradient(90deg, #e9f08f 0, #e3ed9b 110px, #dbe6b5 145px, #e0e6af 300px, #dfe5ad 470px, #deea9f 600px, #e6f094 770px, #e6f297 1180px, #dce7a9 1370px, #dbe1b9 1520px, #dce4b2 1660px, #e4ec98 1750px, #e9ea95 1919px); color: #1c1c1c; }
.weather { width: 407px; display: flex; gap: 5.500px; padding-left: 27px; }
.sun { width: 32px; height: 34px; padding-top: 9px; margin-top: -1px; position: relative; }
.sun::before { content: ""; display: block; width: 25px; height: 25px; border-radius: 50%; background: linear-gradient(135deg, #f5bb35, #ee6210); }
.sun b { position: absolute; left: 11px; top: 0; width: 20px; height: 20px; border-radius: 50%; background: #c42b1c; color: #fff; font-size: 13px; text-align: center; }
.muted { color: #5c614b; letter-spacing: .25px; }
.apps { display: flex; align-items: center; }
.app { width: 55.070px; height: 58px; display: flex; align-items: center; justify-content: center; position: relative; }
.run::after { content: ""; position: absolute; left: 23.500px; bottom: 5px; width: 8px; height: 4px; border-radius: 2px; background: #858a5b; }
.start { width: 60px; padding-right: 5px; }
.search { width: 273px; height: 38px; margin-right: 3px; display: flex; align-items: center; gap: 12px; padding-left: 14px; background: #f6f9e5; border-radius: 19px; box-shadow: 0 1px 1px #a8ae83; font-size: 16.300px; color: #5b5e52; }
.teams { font: 700 12px "Noto Sans", sans-serif; fill: #fff; }
.netflix { color: #d80f18; font: 700 29px "Liberation Sans", sans-serif; transform: scaleX(.65); -webkit-text-stroke: .8px #d80f18; }
.tray { flex: 1; display: grid; grid-template-columns: 40px 40px 40px 30px 30px 1fr; justify-items: center; align-items: center; padding: 0 23px 0 114.500px; }
.volume { margin-right: 9px; }
.battery { margin-right: 10px; }
.ink { color: #222; }
.datetime { justify-self: end; text-align: right; letter-spacing: .2px; }
```
